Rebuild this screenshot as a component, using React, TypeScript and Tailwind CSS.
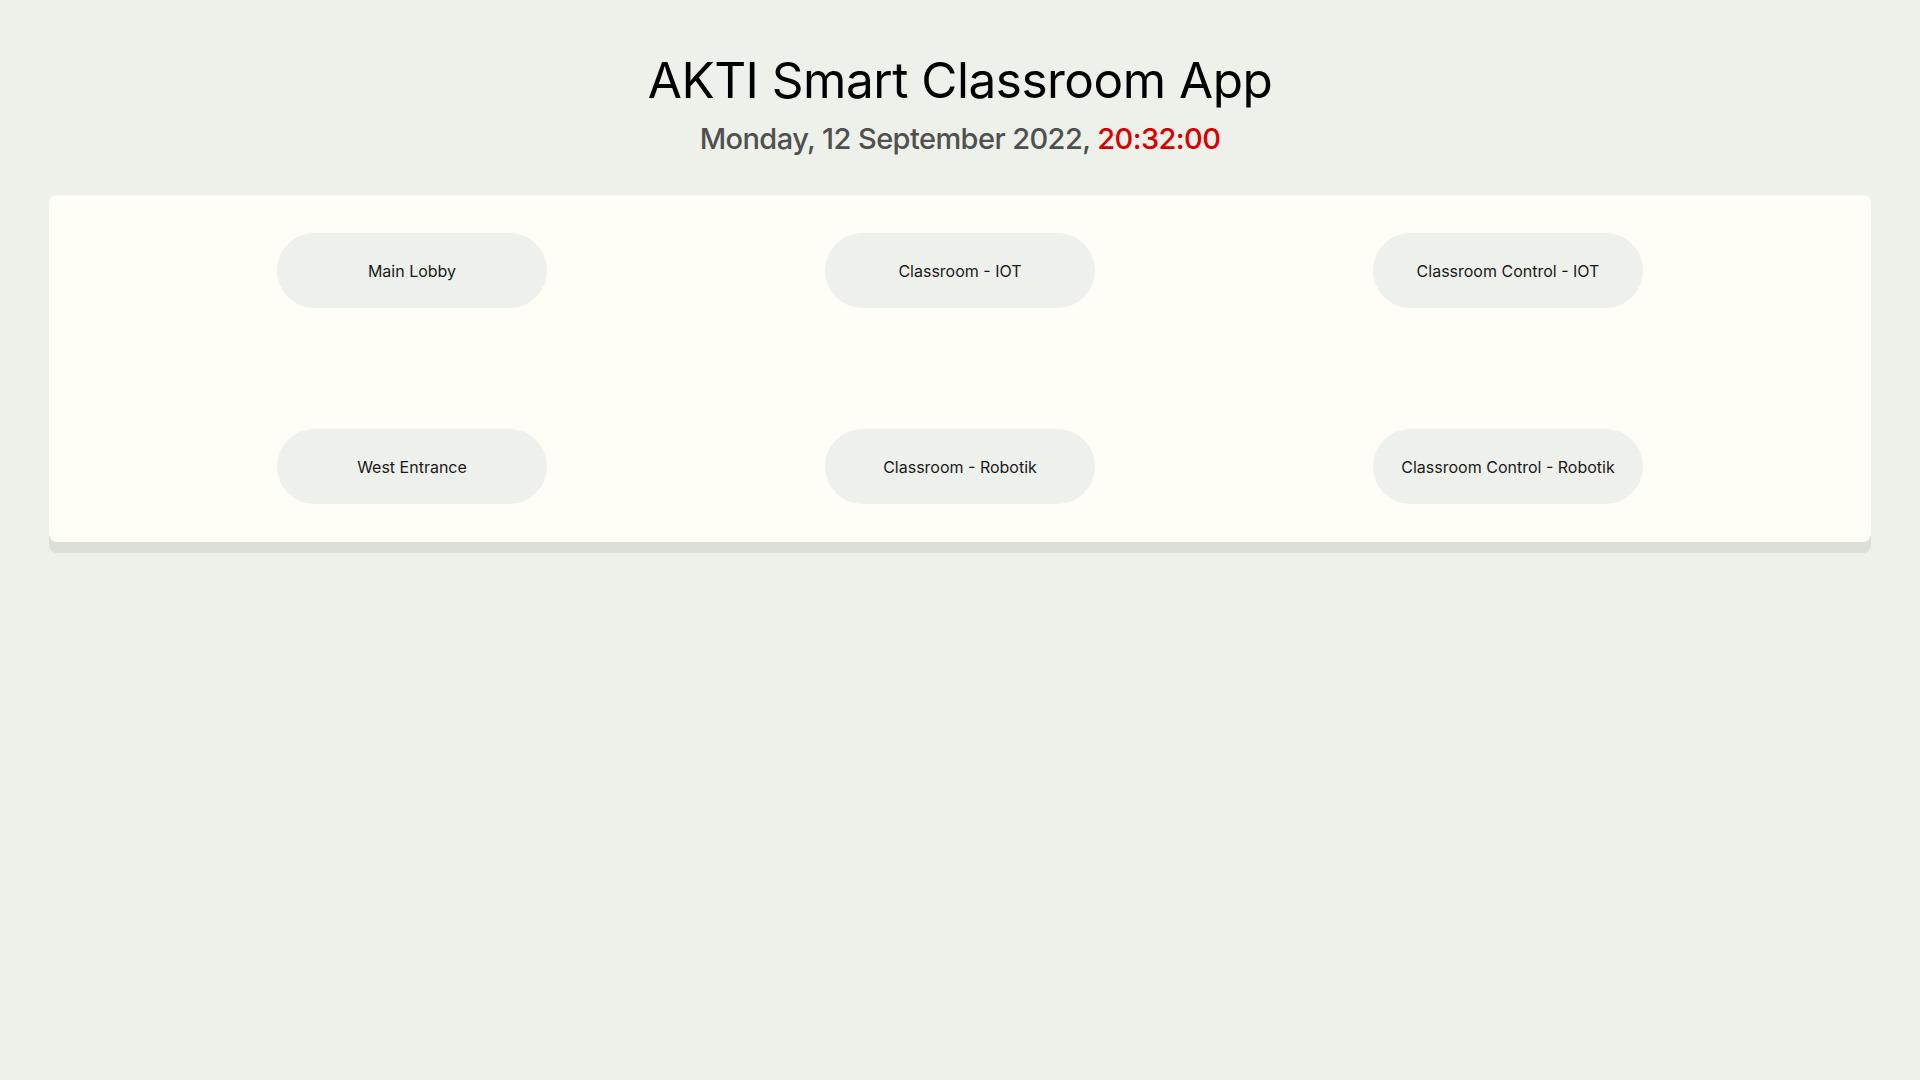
const rooms = [
  "Main Lobby",
  "Classroom - IOT",
  "Classroom Control - IOT",
  "West Entrance",
  "Classroom - Robotik",
  "Classroom Control - Robotik",
];

export default function App() {
  return (
    <main className="min-h-screen bg-[#eef0ea] font-['Inter',sans-serif] pt-[50px]">
      <header className="flex flex-col items-center text-center">
        <h1 className="text-[49.5px] leading-[60px] font-normal tracking-[-0.01em] text-black">
          AKTI Smart Classroom App
        </h1>
        <p className="mt-[9px] text-[29px] leading-[40px] font-medium tracking-[-0.02em] text-[#505050]">
          Monday, 12 September 2022, <span className="text-[#d80000]">20:32:00</span>
        </p>
      </header>

      <section className="mx-[49px] mt-[36px] rounded-lg bg-[#fefef6] py-[38px] shadow-[0_11px_0_#dcdfd5]">
        <div className="grid grid-cols-[repeat(3,548px)] justify-center gap-y-[121px]">
          {rooms.map((room) => (
            <div key={room} className="flex justify-center">
              <button className="flex h-[75px] w-[270px] items-center justify-center rounded-full bg-[#eef0eb] text-[16px] text-[#1a1a1a]">
                {room}
              </button>
            </div>
          ))}
        </div>
      </section>
    </main>
  );
}
